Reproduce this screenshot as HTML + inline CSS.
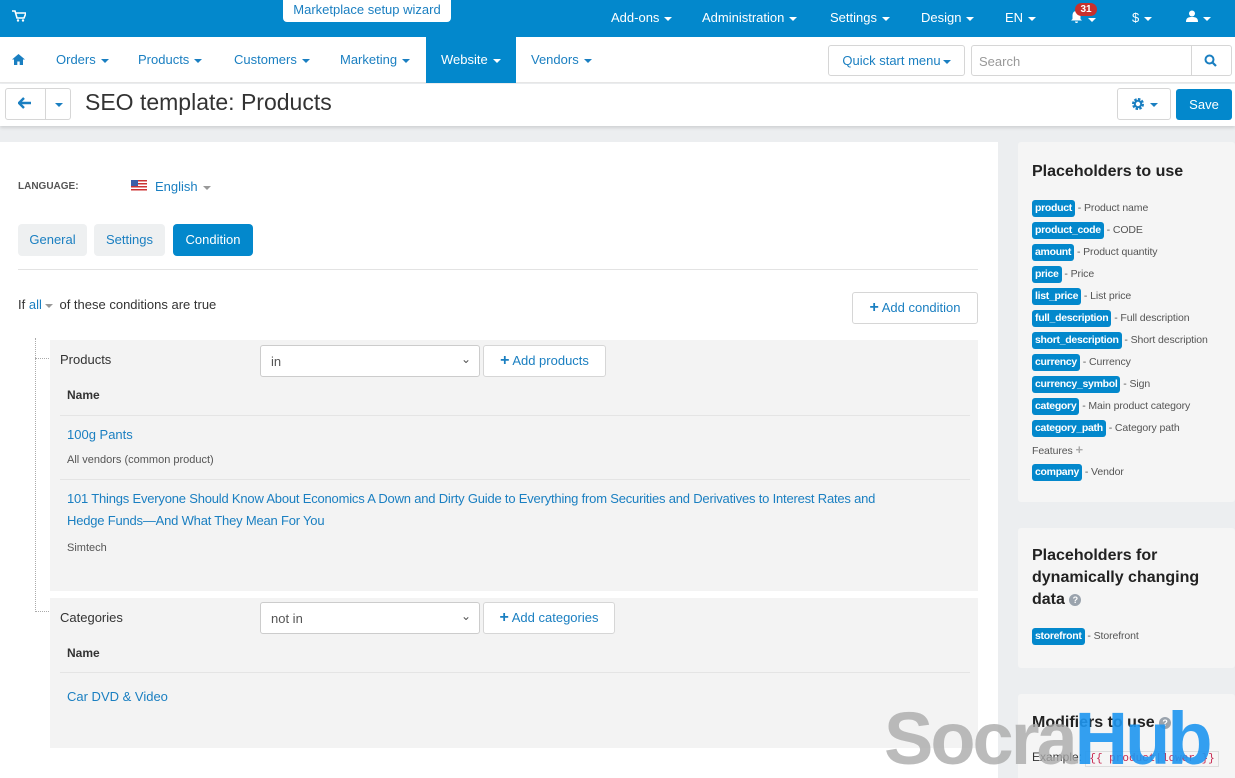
<!DOCTYPE html>
<html><head><meta charset="utf-8"><style>
*{box-sizing:border-box;margin:0;padding:0}
html,body{width:1235px;height:778px;overflow:hidden}
body{background:#eceef0;font-family:"Liberation Sans",sans-serif;font-size:13px;color:#333;position:relative}
.a{position:absolute}
.top{left:0;top:0;width:1235px;height:37px;background:#0388cc;color:#fff}
.top span{position:absolute;top:10px;font-size:13px}
.caret{display:inline-block;width:0;height:0;border-left:4px solid transparent;border-right:4px solid transparent;border-top:4px solid currentColor;vertical-align:middle;margin-left:5px}
.nav{left:0;top:37px;width:1235px;height:46px;background:#fff;border-bottom:1px solid #e6e6e6}
.nav span{position:absolute;top:15px;color:#1a7fc1;font-size:13px}
.bar{left:0;top:84px;width:1235px;height:42px;background:#fff;box-shadow:0 2px 3px rgba(0,0,0,.12)}
.btn{position:absolute;background:#fff;border:1px solid #d6d6d6;border-radius:3px;color:#1a7fc1}
.main{left:0;top:142px;width:998px;height:636px;background:#fff}
.link{color:#1a7fc1}
.box{position:absolute;left:50px;width:928px;background:#f3f3f3}
.sel{position:absolute;background:#fff;border:1px solid #ccc;border-radius:3px;height:32px;padding:8px 10px;font-size:13px;color:#555}
.card{position:absolute;left:1018px;width:217px;background:#f5f5f5;border-radius:3px}
.card h3{font-size:16px;font-weight:bold;color:#222;line-height:22px}
.ph{font-size:10.5px;color:#555;height:22px;line-height:18px;white-space:nowrap;letter-spacing:-.1px}
.tag{display:inline-block;background:#0388cc;color:#fff;font-weight:bold;font-size:10.5px;padding:0 3px;border-radius:3px;line-height:17px;letter-spacing:-.3px}
</style></head><body>
<div class="a top">
<span style="left:12px;top:10px">
<svg width="14" height="12" viewBox="0 0 14 12"><path d="M0 1h3l2 7h7l2-5H4" fill="none" stroke="#fff" stroke-width="1.6"/><circle cx="6" cy="10.5" r="1.2" fill="#fff"/><circle cx="11" cy="10.5" r="1.2" fill="#fff"/></svg></span>
<div class="a" style="left:283px;top:0;width:168px;height:22px;background:#fff;border-radius:0 0 4px 4px;color:#1a7fc1;font-size:13px;text-align:center;line-height:19px">Marketplace setup wizard</div>
<span style="left:611px">Add-ons<i class="caret"></i></span>
<span style="left:702px">Administration<i class="caret"></i></span>
<span style="left:830px">Settings<i class="caret"></i></span>
<span style="left:921px">Design<i class="caret"></i></span>
<span style="left:1005px">EN<i class="caret"></i></span>
<span style="left:1070px"><svg width="13" height="13" viewBox="0 0 13 13"><path d="M6.5 1c-3 0-4 2-4 5v3L1 10.5h11L10.5 9V6c0-3-1-5-4-5z M5 11.5h3a1.5 1.5 0 0 1-3 0z" fill="#fff"/></svg><i class="caret"></i></span>
<div class="a" style="left:1075px;top:3px;width:22px;height:13px;background:#c9302c;border-radius:7px;font-size:10px;font-weight:bold;text-align:center;line-height:13px">31</div>
<span style="left:1132px">$<i class="caret"></i></span>
<span style="left:1186px"><svg width="12" height="12" viewBox="0 0 12 12"><circle cx="6" cy="3.5" r="3" fill="#fff"/><path d="M0 12c0-4 2-5 6-5s6 1 6 5z" fill="#fff"/></svg><i class="caret"></i></span>
</div>
<div class="a nav">
<span style="left:12px;top:16px"><svg width="13" height="11" viewBox="0 0 13 11"><path d="M6.5 0L0 5.5h2V11h3.3V7.5h2.4V11H11V5.5h2z" fill="#1a7fc1"/></svg></span>
<span style="left:56px">Orders<i class="caret"></i></span>
<span style="left:138px">Products<i class="caret"></i></span>
<span style="left:234px">Customers<i class="caret"></i></span>
<span style="left:340px">Marketing<i class="caret"></i></span>
<div class="a" style="left:426px;top:0;width:90px;height:46px;background:#0388cc"></div>
<span style="left:441px;color:#fff">Website<i class="caret"></i></span>
<span style="left:531px">Vendors<i class="caret"></i></span>
<div class="btn" style="left:828px;top:8px;width:137px;height:31px;text-align:center;line-height:29px">Quick start menu<i class="caret" style="margin-left:2px"></i></div>
<div class="btn" style="left:971px;top:8px;width:261px;height:31px;color:#999;padding:8px 7px">Search</div>
<div class="a" style="left:1191px;top:8px;width:1px;height:31px;background:#d6d6d6"></div>
<svg class="a" style="left:1204px;top:17px" width="13" height="13" viewBox="0 0 13 13"><circle cx="5.5" cy="5.5" r="4" fill="none" stroke="#1a7fc1" stroke-width="2"/><path d="M8.5 8.5L12 12" stroke="#1a7fc1" stroke-width="2.2"/></svg>
</div>
<div class="a bar">
<div class="btn" style="left:5px;top:4px;width:66px;height:32px"></div>
<div class="a" style="left:45px;top:5px;width:1px;height:30px;background:#d6d6d6"></div>
<svg class="a" style="left:18px;top:13px" width="13" height="12" viewBox="0 0 13 12"><path d="M6 1L1 6l5 5M1 6h12" fill="none" stroke="#1a7fc1" stroke-width="2.4"/></svg>
<i class="caret a" style="left:50px;top:19px;color:#1a7fc1"></i>
<div class="a" style="left:85px;top:5px;font-size:23px;color:#333">SEO template: Products</div>
<div class="btn" style="left:1117px;top:4px;width:54px;height:32px"></div>
<svg class="a" style="left:1131px;top:13px" width="14" height="14" viewBox="0 0 14 14"><circle cx="7" cy="7" r="4.5" fill="none" stroke="#1a7fc1" stroke-width="3" stroke-dasharray="2.3 1.2"/><circle cx="7" cy="7" r="3.2" fill="none" stroke="#1a7fc1" stroke-width="2"/></svg>
<i class="caret a" style="left:1145px;top:19px;color:#1a7fc1"></i>
<div class="a" style="left:1176px;top:5px;width:56px;height:31px;background:#0388cc;border-radius:3px;color:#fff;text-align:center;line-height:31px">Save</div>
</div>
<div class="a main">
<div class="a" style="left:18px;top:39px;font-size:10px;font-weight:bold;color:#555">LANGUAGE:</div>
<div class="a" style="left:131px;top:38px;width:16px;height:11px;background:repeating-linear-gradient(#c33 0 1.5px,#fff 1.5px 3px)"><div style="width:7px;height:6px;background:#3b5fa8"></div></div>
<div class="a link" style="left:155px;top:37px">English<i class="caret" style="color:#999"></i></div>
<div class="a" style="left:18px;top:82px;width:69px;height:32px;background:#eef0f1;border-radius:4px;color:#1a7fc1;text-align:center;line-height:32px">General</div>
<div class="a" style="left:94px;top:82px;width:71px;height:32px;background:#eef0f1;border-radius:4px;color:#1a7fc1;text-align:center;line-height:32px">Settings</div>
<div class="a" style="left:173px;top:82px;width:80px;height:32px;background:#0388cc;border-radius:4px;color:#fff;text-align:center;line-height:32px">Condition</div>
<div class="a" style="left:18px;top:127px;width:960px;height:1px;background:#e3e3e3"></div>
<div class="a" style="left:18px;top:155px">If <span class="link">all</span><i class="caret" style="color:#999;margin:0 3px"></i> of these conditions are true</div>
<div class="btn" style="left:852px;top:150px;width:126px;height:32px;line-height:30px;text-align:center"><b style="font-size:16px">+</b> Add condition</div>
<div class="a" style="left:35px;top:196px;height:274px;border-left:1px dotted #aaa"></div>
<div class="a" style="left:35px;top:216px;width:14px;border-top:1px dotted #aaa"></div>
<div class="a" style="left:35px;top:469px;width:14px;border-top:1px dotted #aaa"></div>
<div class="box" style="top:198px;height:251px">
<div class="a" style="left:10px;top:12px">Products</div>
<div class="sel" style="left:210px;top:5px;width:220px">in<span style="position:absolute;right:8px;top:6px;font-size:12px">&#8964;</span></div>
<div class="btn" style="left:433px;top:5px;width:123px;height:32px;line-height:30px;text-align:center"><b style="font-size:16px">+</b> Add products</div>
<div class="a" style="left:17px;top:48px;font-weight:bold;font-size:12px">Name</div>
<div class="a" style="left:10px;top:75px;width:910px;height:1px;background:#e4e4e4"></div>
<div class="a link" style="left:17px;top:87px">100g Pants</div>
<div class="a" style="left:17px;top:114px;font-size:11px;color:#555">All vendors (common product)</div>
<div class="a" style="left:10px;top:139px;width:910px;height:1px;background:#e4e4e4"></div>
<div class="a link" style="left:17px;top:148px;line-height:22px;width:830px;letter-spacing:-.2px">101 Things Everyone Should Know About Economics A Down and Dirty Guide to Everything from Securities and Derivatives to Interest Rates and Hedge Funds—And What They Mean For You</div>
<div class="a" style="left:17px;top:202px;font-size:11px;color:#555">Simtech</div>
</div>
<div class="box" style="top:456px;height:150px">
<div class="a" style="left:10px;top:12px">Categories</div>
<div class="sel" style="left:210px;top:4px;width:220px">not in<span style="position:absolute;right:8px;top:6px;font-size:12px">&#8964;</span></div>
<div class="btn" style="left:433px;top:4px;width:132px;height:32px;line-height:30px;text-align:center"><b style="font-size:16px">+</b> Add categories</div>
<div class="a" style="left:17px;top:48px;font-weight:bold;font-size:12px">Name</div>
<div class="a" style="left:10px;top:74px;width:910px;height:1px;background:#e4e4e4"></div>
<div class="a link" style="left:17px;top:91px">Car DVD &amp; Video</div>
</div>
</div>
<div class="card" style="top:142px;height:360px;padding:19px 14px">
<h3>Placeholders to use</h3>
<div style="margin-top:16px">
<div class="ph"><span class="tag">product</span> - Product name</div>
<div class="ph"><span class="tag">product_code</span> - CODE</div>
<div class="ph"><span class="tag">amount</span> - Product quantity</div>
<div class="ph"><span class="tag">price</span> - Price</div>
<div class="ph"><span class="tag">list_price</span> - List price</div>
<div class="ph"><span class="tag">full_description</span> - Full description</div>
<div class="ph"><span class="tag">short_description</span> - Short description</div>
<div class="ph"><span class="tag">currency</span> - Currency</div>
<div class="ph"><span class="tag">currency_symbol</span> - Sign</div>
<div class="ph"><span class="tag">category</span> - Main product category</div>
<div class="ph"><span class="tag">category_path</span> - Category path</div>
<div class="ph">Features <b style="color:#aaa;font-size:13px">+</b></div>
<div class="ph"><span class="tag">company</span> - Vendor</div>
</div></div>
<div class="card" style="top:528px;height:140px;padding:17px 14px">
<h3>Placeholders for dynamically changing data <span style="display:inline-block;width:12px;height:12px;border-radius:6px;background:#9aa3ad;color:#fff;font-size:9px;text-align:center;line-height:12px;vertical-align:middle">?</span></h3>
<div class="ph" style="margin-top:16px"><span class="tag">storefront</span> - Storefront</div>
</div>
<div class="card" style="top:694px;height:90px;padding:18px 14px">
<h3>Modifiers to use <span style="display:inline-block;width:12px;height:12px;border-radius:6px;background:#9aa3ad;color:#fff;font-size:9px;text-align:center;line-height:12px;vertical-align:middle">?</span></h3>
<div style="margin-top:16px;font-size:12px;white-space:nowrap">Example: <code style="font-family:'Liberation Mono',monospace;color:#c7254e;font-size:11px;border:1px solid #ddd;padding:1px 3px">{{ product|lower }}</code></div>
</div>
<div class="a" style="left:884px;top:700px;font-size:74px;font-weight:bold;line-height:78px;letter-spacing:-3px;white-space:nowrap"><span style="color:rgba(170,170,170,.8)">Socra</span><span style="color:rgba(30,150,240,.9)">Hub</span></div>
</body></html>
